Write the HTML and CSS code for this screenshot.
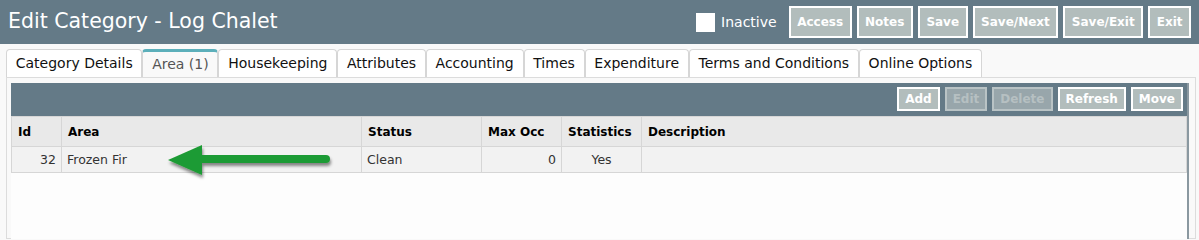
FILE: index.html
```html
<!DOCTYPE html>
<html>

<head>
    <title>Edit Category - Log Chalet</title>
    <link rel="stylesheet" href="styles.css">
</head>

<body>
    <div id="header">
        <div id="title">Edit Category - Log Chalet</div>
        <div class="actions">
            <span class="check"></span>
            <span class="check-label">Inactive</span>
            <button class="btn">Access</button>
            <button class="btn">Notes</button>
            <button class="btn">Save</button>
            <button class="btn">Save/Next</button>
            <button class="btn">Save/Exit</button>
            <button class="btn">Exit</button>
        </div>
    </div>

    <div id="tabs">
        <div class="tab">Category Details</div>
        <div class="tab active">Area (1)</div>
        <div class="tab">Housekeeping</div>
        <div class="tab">Attributes</div>
        <div class="tab">Accounting</div>
        <div class="tab">Times</div>
        <div class="tab">Expenditure</div>
        <div class="tab">Terms and Conditions</div>
        <div class="tab">Online Options</div>
    </div>

    <div id="panel">
        <div class="grid">
            <div class="toolbar">
                <button class="btn small">Add</button>
                <button class="btn small off">Edit</button>
                <button class="btn small off">Delete</button>
                <button class="btn small">Refresh</button>
                <button class="btn small">Move</button>
            </div>
            <table>
                <colgroup>
                    <col style="width: 50px">
                    <col style="width: 300px">
                    <col style="width: 120px">
                    <col style="width: 80px">
                    <col style="width: 80px">
                    <col>
                </colgroup>
                <tr>
                    <th>Id</th>
                    <th>Area</th>
                    <th>Status</th>
                    <th>Max Occ</th>
                    <th>Statistics</th>
                    <th>Description</th>
                </tr>
                <tr>
                    <td class="num">32</td>
                    <td>Frozen Fir</td>
                    <td>Clean</td>
                    <td class="num">0</td>
                    <td class="mid">Yes</td>
                    <td></td>
                </tr>
            </table>
            <div class="empty"></div>
        </div>

        <!-- pointer arrow drawn over the grid -->
        <svg class="arrow" width="180" height="40" viewBox="0 0 180 40">
            <defs>
                <filter id="shade" x="-10%" y="-30%" width="130%" height="180%">
                    <feDropShadow dx="1" dy="3" stdDeviation="1.5" flood-color="#000" flood-opacity="0.45" />
                </filter>
            </defs>
            <g filter="url(#shade)">
                <line x1="36" y1="14" x2="160" y2="14" stroke="#1f9b34" stroke-width="8" stroke-linecap="round" />
                <polygon points="2,15 36,0 36,30" fill="#1f9b34" />
            </g>
        </svg>
    </div>
</body>

</html>
```

FILE: styles.css
```css
body {
    margin: 0;
    background-color: #f9f9f9;
    font-family: "DejaVu Sans", Verdana, sans-serif;
    color: #222;
    overflow: hidden;
}

#header {
    display: flex;
    align-items: center;
    justify-content: space-between;
    height: 44px;
    padding: 0 8px;
    background-color: #647a87;
}

#title {
    color: #fff;
    font-size: 20.5px;
    margin-top: -2px;
}

.actions {
    display: flex;
    align-items: center;
    gap: 5px;
}

.check {
    width: 19px;
    height: 19px;
    background-color: #fff;
    margin-right: 1px;
}

.check-label {
    color: #fff;
    font-size: 14px;
    margin-right: 7px;
}

.btn {
    height: 32px;
    padding: 0 6.5px;
    border: solid #fff 2px;
    background-color: #b2bdbc;
    color: #fff;
    font-family: "DejaVu Sans", Verdana, sans-serif;
    font-size: 12px;
    font-weight: bold;
}

#tabs {
    display: flex;
    padding: 5px 0 0 6px;
    height: 28px;
}

.tab {
    padding: 5px 8.75px 0 8.75px;
    border: solid #d6d6d6 1px;
    border-bottom: none;
    border-radius: 4px 4px 0 0;
    background-color: #fff;
    font-size: 14px;
    color: #111;
}

.tab.active {
    border-top: solid #5cafba 3px;
    padding-top: 4px;
    background-color: #f9f9f9;
    color: #555;
}

#panel {
    position: relative;
    margin: 0 3px 0 6px;
    padding: 5px 6px 0 4px;
    border: solid #dcdcdc 1px;
    height: 155px;
}

.grid {
    border-right: solid #8a98a0 2px;
    background-color: #fdfdfd;
}

.toolbar {
    display: flex;
    justify-content: flex-end;
    gap: 5px;
    height: 33px;
    padding: 4px 4px 0 0;
    box-sizing: border-box;
    background-color: #647a87;
}

.btn.small {
    height: 24px;
    padding: 0 6px;
}

.btn.off {
    color: #b6c0c2;
    background-color: #98a6ab;
    border-color: #b9c3c5;
}

table {
    width: 100%;
    border-collapse: collapse;
    table-layout: fixed;
    font-size: 12.5px;
}

th {
    height: 29px;
    text-align: left;
    padding: 0 6px;
    background-color: #e9e9e9;
    border: solid #d6d6d6 1px;
    color: #000;
    font-size: 12px;
}

td {
    height: 25px;
    padding: 0 5px;
    background-color: #f2f2f2;
    border: solid #d6d6d6 1px;
    color: #333;
}

.num {
    text-align: right;
}

.mid {
    text-align: center;
}

.empty {
    height: 80px;
}

.arrow {
    position: absolute;
    left: 159px;
    top: 67px;
}
```
